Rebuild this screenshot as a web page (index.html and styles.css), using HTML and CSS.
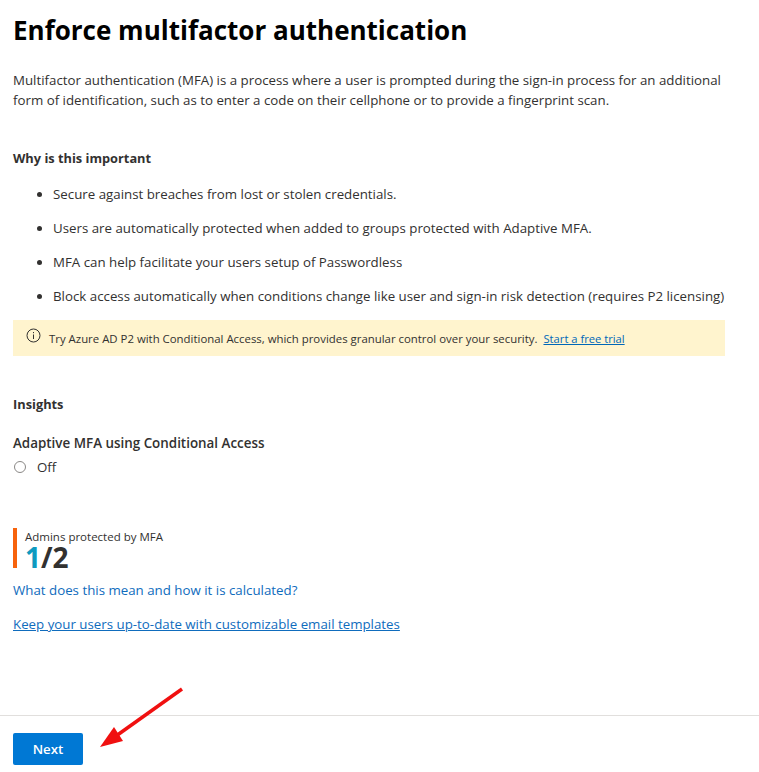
FILE: index.html
```html
<!DOCTYPE html>
<html lang="en">
<head>
  <meta charset="UTF-8">
  <title>Enforce multifactor authentication</title>
  <link rel="stylesheet" href="styles.css">
</head>
<body>
  <div class="page">
    <main class="content">
      <h1>Enforce multifactor authentication</h1>
      <p class="intro">Multifactor authentication (MFA) is a process where a user is prompted during the sign-in process for an additional form of identification, such as to enter a code on their cellphone or to provide a fingerprint scan.</p>

      <h2 class="why">Why is this important</h2>
      <ul class="reasons">
        <li>Secure against breaches from lost or stolen credentials.</li>
        <li>Users are automatically protected when added to groups protected with Adaptive MFA.</li>
        <li>MFA can help facilitate your users setup of Passwordless</li>
        <li>Block access automatically when conditions change like user and sign-in risk detection (requires P2 licensing)</li>
      </ul>

      <!-- Upsell banner -->
      <div class="banner">
        <svg class="banner-icon" width="15" height="15" viewBox="0 0 15 15" fill="none" stroke="#323130">
          <circle cx="7.5" cy="7.5" r="6.5"/>
          <path d="M7.5 6.5v4.5"/>
          <path d="M7.5 4v1.2"/>
        </svg>
        <span>Try Azure AD P2 with Conditional Access, which provides granular control over your security.</span>
        <a href="#" class="banner-link">Start a free trial</a>
      </div>

      <h2 class="insights">Insights</h2>
      <h3 class="adaptive">Adaptive MFA using Conditional Access</h3>
      <label class="radio">
        <span class="radio-dot"></span>
        <span>Off</span>
      </label>

      <div class="stat">
        <div class="stat-label">Admins protected by MFA</div>
        <div class="stat-value"><span class="stat-num">1</span>/2</div>
      </div>
      <a href="#" class="link-plain">What does this mean and how it is calculated?</a>
      <a href="#" class="link-under">Keep your users up-to-date with customizable email templates</a>
    </main>

    <footer class="footer">
      <button class="next">Next</button>
    </footer>
  </div>

  <!-- Annotation arrow -->
  <svg class="arrow" width="100" height="75" viewBox="0 0 100 75">
    <path d="M82 9L16 56" stroke="#f01010" stroke-width="3.5" fill="none"/>
    <path d="M0 67L14 47L23 61Z" fill="#f01010"/>
  </svg>
</body>
</html>
```

FILE: styles.css
```css
/* General Styles */
body {
  font-family: 'Open Sans', 'Noto Sans', sans-serif;
  margin: 0;
  padding: 0;
  background: #fff;
  color: #323130;
  font-size: 13.3px;
  line-height: 20px;
}

.page {
  display: flex;
  flex-direction: column;
  height: 772px;
  overflow: hidden;
}

.content {
  flex: 1;
  padding: 12px 13px 0;
}

h1 {
  margin: 0 0 22px;
  font-size: 26px;
  line-height: 36px;
  font-weight: 700;
  color: #000;
}

.intro {
  margin: 0 0 38px;
  width: 725px;
}

h2, h3 {
  margin: 0;
  font-size: 13.4px;
  font-weight: 600;
}

h2 {
  font-size: 12.8px;
  font-weight: 700;
}

.why {
  margin-bottom: 16px;
}

.reasons {
  margin: 0;
  padding: 0 0 0 40px;
}

.reasons li {
  margin-bottom: 14px;
}

.banner {
  box-sizing: border-box;
  display: flex;
  align-items: center;
  gap: 8px;
  width: 712px;
  height: 36px;
  padding: 1px 0 0 13px;
  margin-bottom: 38px;
  background: #fff4ce;
  font-size: 11.4px;
}

.banner-icon {
  margin-top: -6px;
}

.banner-link {
  margin-left: -2px;
  color: #0067b8;
  font-size: 11.2px;
}

.insights {
  margin-bottom: 19px;
}

.radio {
  display: flex;
  align-items: center;
  gap: 11px;
  margin-top: 4px;
}

.radio-dot {
  box-sizing: border-box;
  width: 12px;
  height: 12px;
  margin-left: 1px;
  border: 1px solid #8a8886;
  border-radius: 50%;
}

.stat {
  margin-top: 51px;
  height: 40px;
  padding-left: 8px;
  border-left: 4px solid #f7630c;
  margin-bottom: 12px;
}

.stat-label {
  font-size: 11.5px;
  line-height: 18px;
}

.stat-value {
  font-size: 28px;
  line-height: 23px;
  font-weight: 700;
}

.stat-num {
  color: #0e9ac0;
}

.link-plain, .link-under {
  display: block;
  width: max-content;
  color: #0f6cbd;
  text-decoration: none;
}

.link-under {
  margin-top: 14px;
  text-decoration: underline;
}

.footer {
  box-sizing: border-box;
  height: 57px;
  border-top: 1px solid #e1dfdd;
  padding: 17px 13px 0;
}

.next {
  display: block;
  width: 70px;
  height: 32px;
  padding: 0;
  border: none;
  border-radius: 2px;
  background: #0078d4;
  color: #fff;
  font: 600 13.3px 'Open Sans', sans-serif;
}

.arrow {
  position: absolute;
  left: 100px;
  top: 680px;
}
```
